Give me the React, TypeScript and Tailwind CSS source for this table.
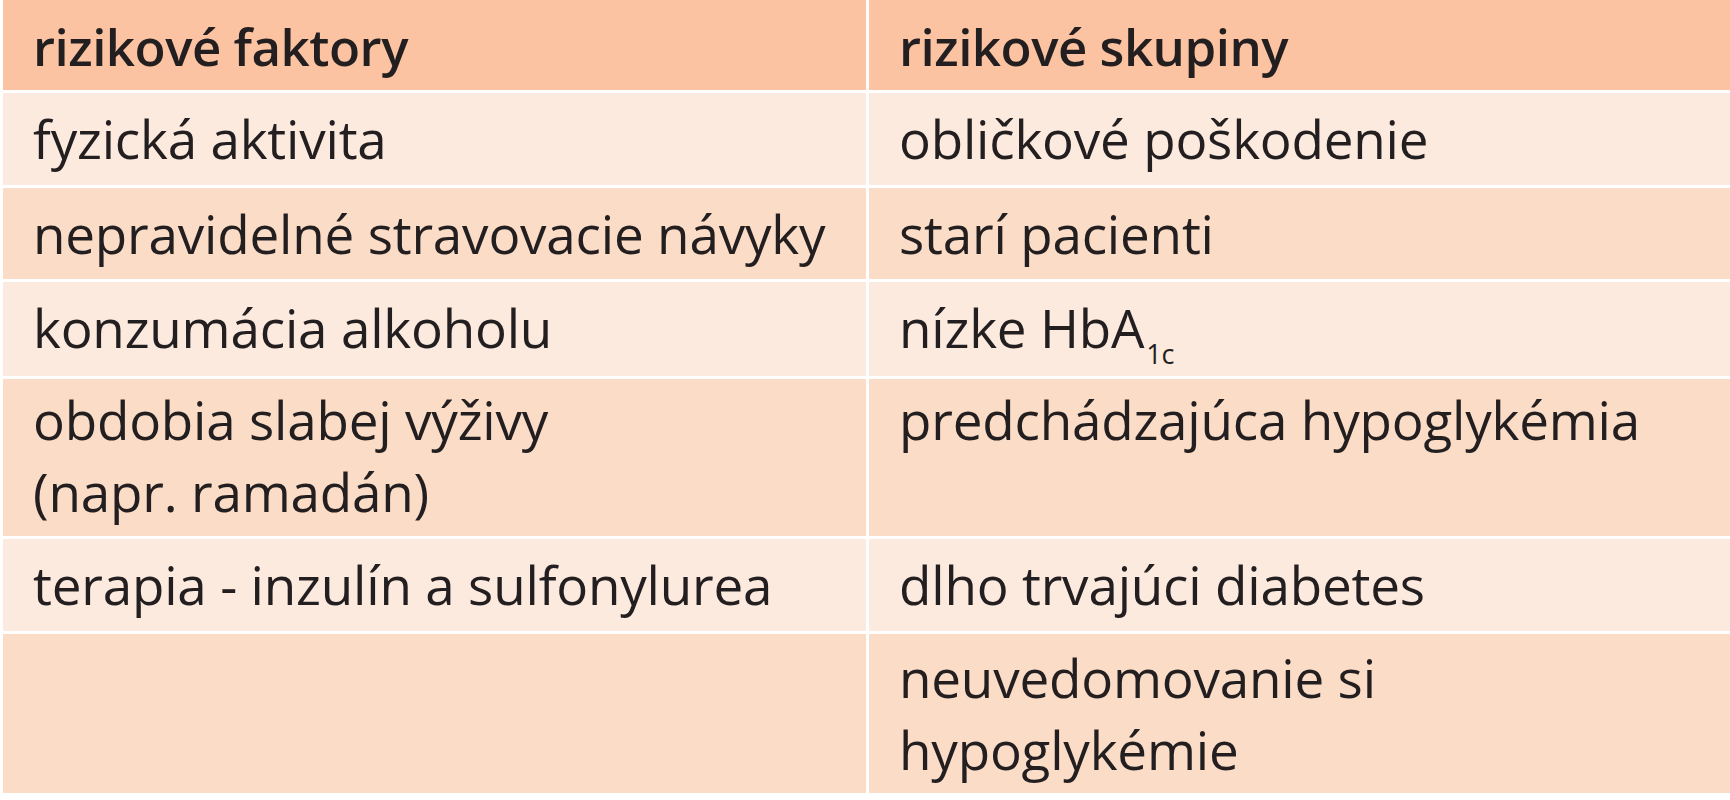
import React from "react";

type Cell = React.ReactNode;

const rows: { a: Cell; b: Cell; tone: "light" | "mid"; h: string; pt: string }[] = [
  { a: "fyzická aktivita", b: "obličkové poškodenie", tone: "light", h: "h-[92px]", pt: "pt-[10px]" },
  { a: "nepravidelné stravovacie návyky", b: "starí pacienti", tone: "mid", h: "h-[91px]", pt: "pt-[10px]" },
  {
    a: "konzumácia alkoholu",
    b: (
      <>
        nízke HbA<span className="text-[27px] align-[-16px] ml-[2px]">1c</span>
      </>
    ),
    tone: "light",
    h: "h-[94px]",
    pt: "pt-[10px]",
  },
  {
    a: (
      <>
        obdobia slabej výživy
        <br />
        (napr. ramadán)
      </>
    ),
    b: "predchádzajúca hypoglykémia",
    tone: "mid",
    h: "h-[157px]",
    pt: "pt-[5px]",
  },
  { a: "terapia - inzulín a sulfonylurea", b: "dlho trvajúci diabetes", tone: "light", h: "h-[92px]", pt: "pt-[10px]" },
  {
    a: "",
    b: (
      <>
        neuvedomovanie si
        <br />
        hypoglykémie
      </>
    ),
    tone: "mid",
    h: "h-[159px]",
    pt: "pt-[8px]",
  },
];

export default function App() {
  return (
    <div
      className="w-[1730px] h-[800px] bg-white pl-[3px] text-[#231f20] overflow-hidden"
      style={{ fontFamily: '"Open Sans", "Noto Sans", sans-serif' }}
    >
      <div className="grid grid-cols-[863px_861px] gap-x-[3px] gap-y-[3px]">
        <div className="h-[90px] bg-[#fbc3a2] pl-[30px] pt-[10px] text-[51px] leading-[72px] font-semibold tracking-[-0.5px] [font-stretch:88%]">
          rizikové faktory
        </div>
        <div className="h-[90px] bg-[#fbc3a2] pl-[30px] pt-[10px] text-[51px] leading-[72px] font-semibold tracking-[-0.5px] [font-stretch:88%]">
          rizikové skupiny
        </div>
        {rows.map((r, i) => {
          const bg = r.tone === "light" ? "bg-[#fdeadf]" : "bg-[#fbdcc7]";
          return (
            <React.Fragment key={i}>
              <div className={`${r.h} ${bg} ${r.pt} pl-[30px] text-[53px] leading-[72px] tracking-[-0.2px] [font-stretch:88%]`}>{r.a}</div>
              <div className={`${r.h} ${bg} ${r.pt} pl-[30px] text-[53px] leading-[72px] tracking-[-0.2px] [font-stretch:88%]`}>{r.b}</div>
            </React.Fragment>
          );
        })}
      </div>
    </div>
  );
}
